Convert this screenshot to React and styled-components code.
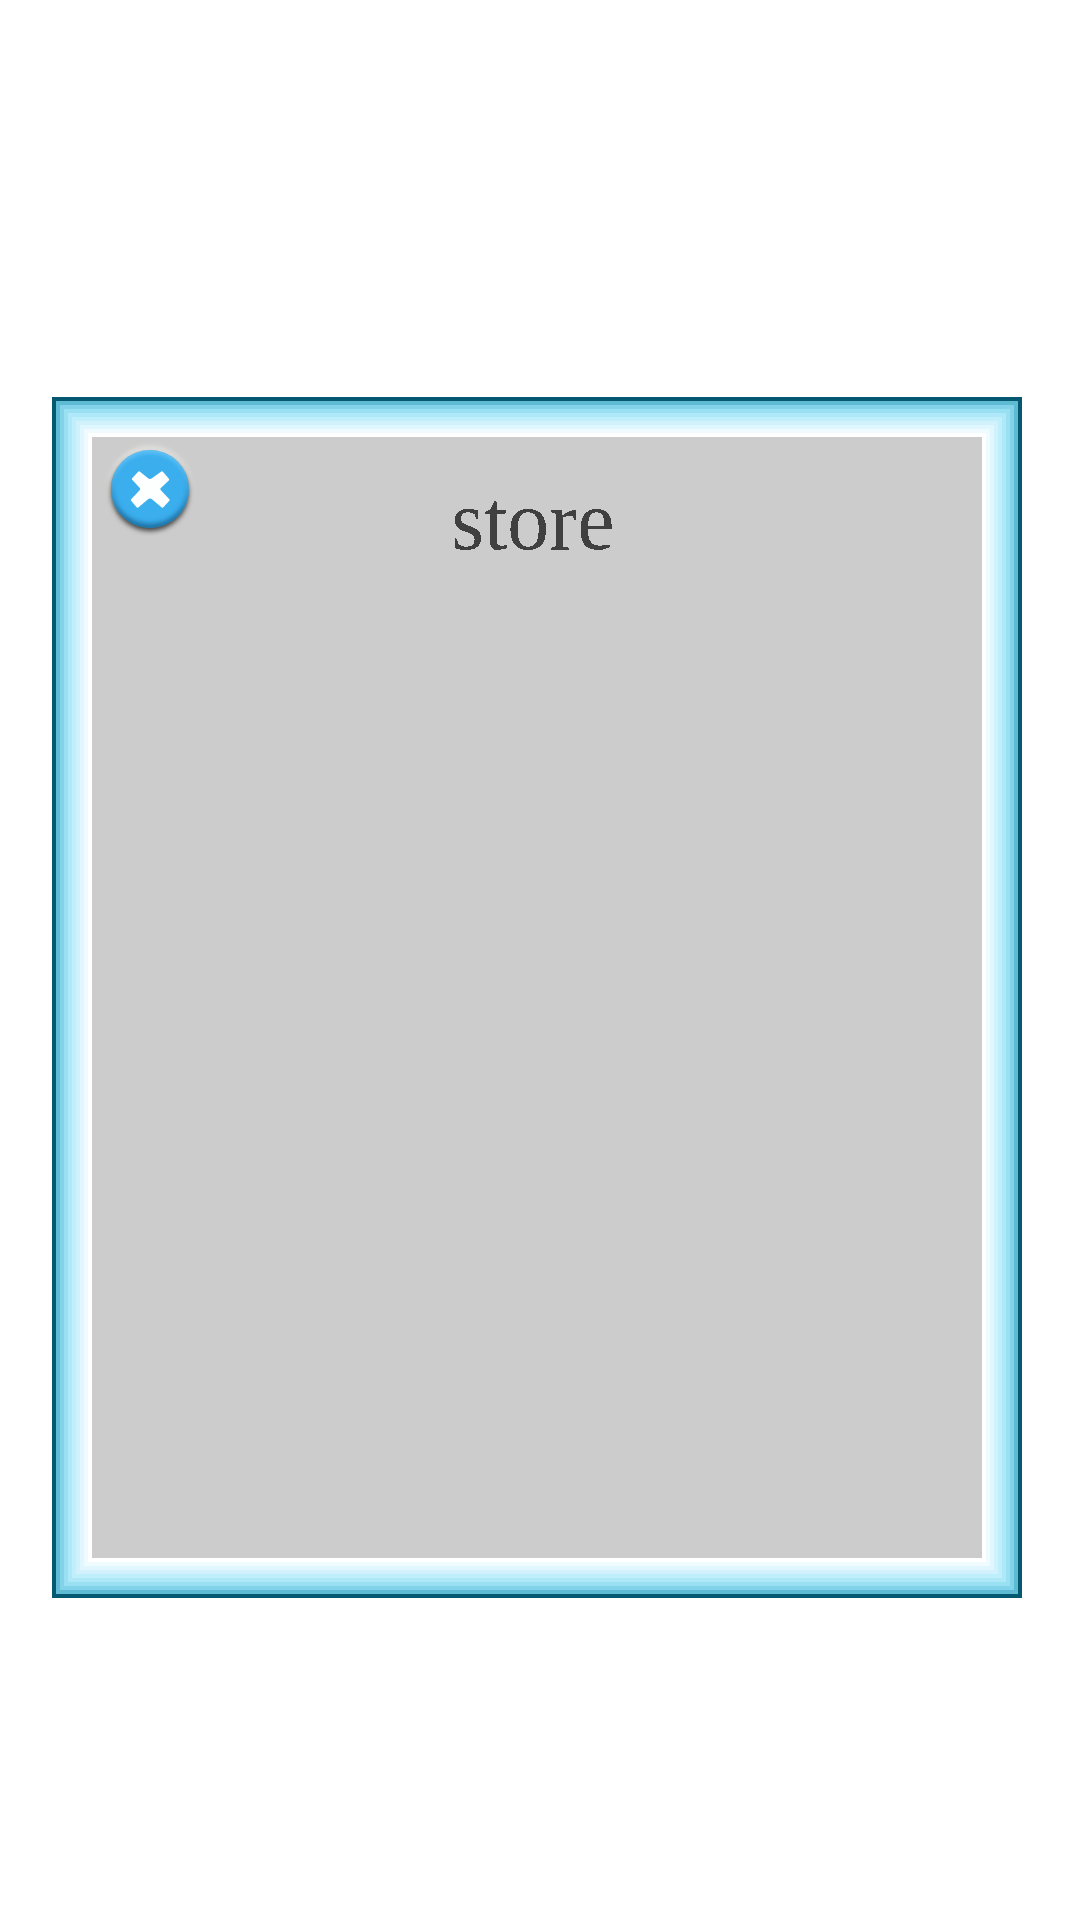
import React from "react";
import styled, { createGlobalStyle } from "styled-components";

const GlobalStyle = createGlobalStyle`
  body { margin: 0; background: #ffffff; }
`;

const Page = styled.main`
  box-sizing: border-box;
  height: 1920px;
  padding: 397px 58px 0 52px;
  background: #ffffff;
`;

const Dialog = styled.section`
  box-sizing: border-box;
  width: 970px;
  height: 1201px;
  padding: 40px;
  background: #cccccc;
  box-shadow:
    inset 0 0 0 4px #04586f,
    inset 0 0 0 8px #5fbad4,
    inset 0 0 0 12px #82d3ea,
    inset 0 0 0 16px #99e0f3,
    inset 0 0 0 20px #afe9f9,
    inset 0 0 0 24px #c0effc,
    inset 0 0 0 28px #d1f2fd,
    inset 0 0 0 32px #e0f7ff,
    inset 0 0 0 36px #f0fbff,
    inset 0 0 0 40px #ffffff;
`;

const Header = styled.header`
  display: grid;
  grid-template-columns: 98px 1fr 98px;
  align-items: start;
`;

const CloseButton = styled.button`
  width: 78px;
  height: 78px;
  margin: 13px 0 0 19px;
  padding: 0;
  border: 0;
  border-radius: 50%;
  background: #3baeee;
  box-shadow:
    inset 0 3px 4px rgba(125, 210, 250, 0.6),
    inset 0 -4px 5px rgba(8, 70, 110, 0.6),
    0 3px 5px rgba(0, 0, 0, 0.7),
    0 -2px 6px 1px rgba(245, 245, 240, 0.75);

  svg { display: block; }
`;

const Title = styled.h1`
  margin: 36px 0 0 -8px;
  font: 400 84px/96px "Liberation Serif", "Times New Roman", serif;
  color: #404040;
  text-align: center;
  filter: url(#crisp);
`;

const Filters = styled.svg`
  position: absolute;
`;

function CloseIcon() {
  return (
    <svg width="78" height="78" viewBox="0 0 78 78" aria-hidden="true">
      <path
        d="M28 22.5 L36 29 Q39 31.5 42 29 L51 22.5 L57 29.5 L49 37 Q47 39 49 41 L57.5 50 L51.5 56.5 L42 48.5 Q39 46 36 48.5 L26.5 56.5 L21 50 L29.5 41 Q31.5 39 29.5 37 L22 29 Z"
        fill="#fdfefe"
        stroke="#fdfefe"
        strokeWidth="2.4"
        strokeLinejoin="round"
      />
    </svg>
  );
}

export default function App() {
  return (
    <>
      <GlobalStyle />
      <Filters width="0" height="0" aria-hidden="true">
        <filter id="crisp" colorInterpolationFilters="sRGB">
          <feComponentTransfer>
            <feFuncA type="discrete" tableValues="0 1" />
          </feComponentTransfer>
        </filter>
      </Filters>
      <Page>
        <Dialog>
          <Header>
            <CloseButton aria-label="Close"><CloseIcon /></CloseButton>
            <Title>store</Title>
          </Header>
        </Dialog>
      </Page>
    </>
  );
}
